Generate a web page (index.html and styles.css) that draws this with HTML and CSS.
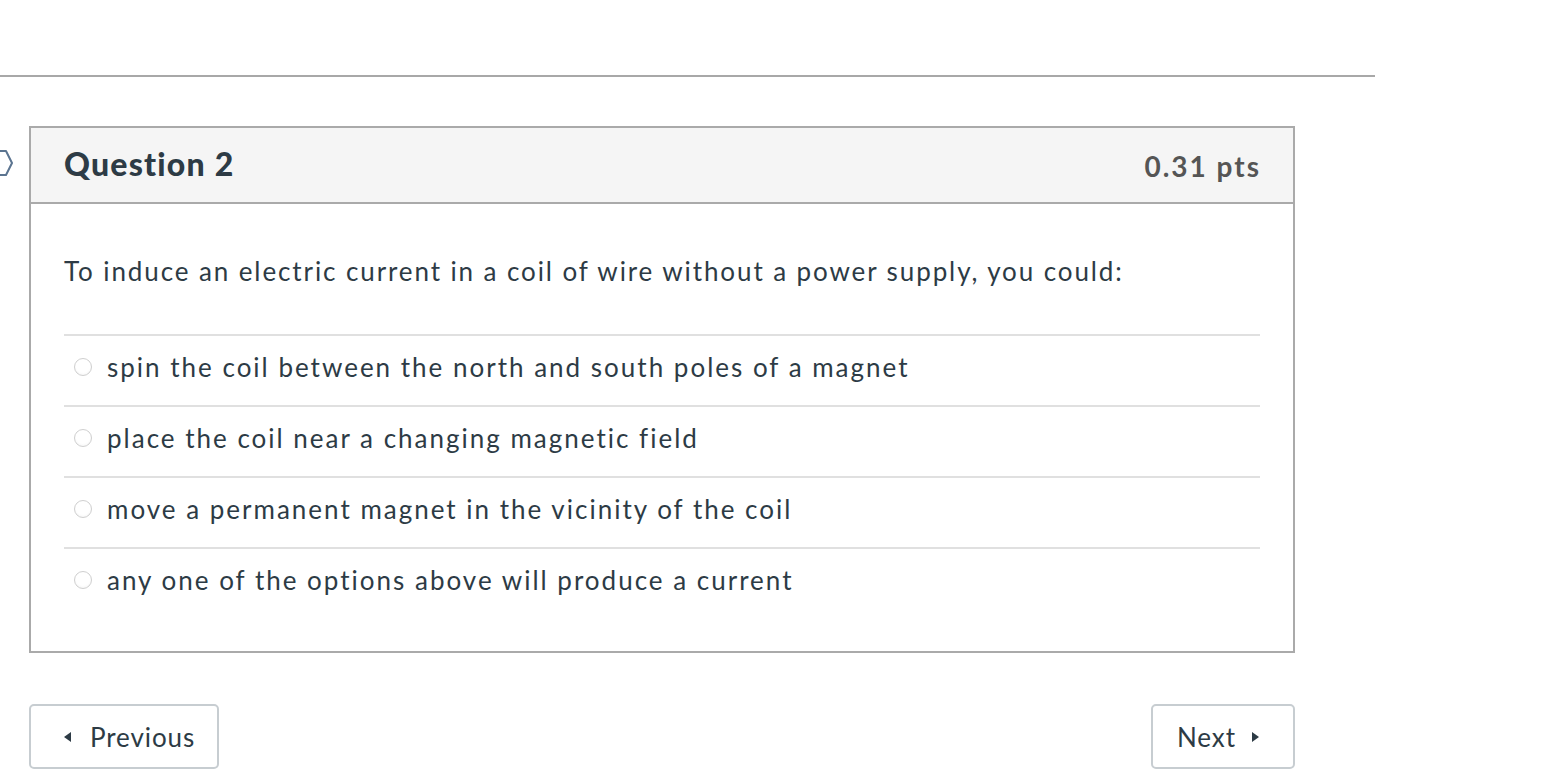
FILE: index.html
```html
<!DOCTYPE html>
<html>
<head>
<meta charset="utf-8">
<link rel="stylesheet" href="styles.css">
</head>
<body>
<div class="page">
  <div class="topspace"></div>
  <div class="rule"></div>
  <div class="question-row">
    <svg class="flag" width="16" height="40" viewBox="0 0 16 40">
      <polyline points="-4,9 6,9 12,21 6,33 -4,33" fill="none" stroke="#5b7490" stroke-width="2" stroke-linejoin="round"/>
    </svg>
    <div class="question">
      <div class="q-header">
        <span class="q-title">Question 2</span>
        <span class="q-pts">0.31 pts</span>
      </div>
      <div class="q-body">
        <p class="q-text">To induce an electric current in a coil of wire without a power supply, you could:</p>
        <div class="answers">
          <div class="answer"><span class="radio"></span><span class="a-text">spin the coil between the north and south poles of a magnet</span></div>
          <div class="answer"><span class="radio"></span><span class="a-text">place the coil near a changing magnetic field</span></div>
          <div class="answer"><span class="radio"></span><span class="a-text">move a permanent magnet in the vicinity of the coil</span></div>
          <div class="answer"><span class="radio"></span><span class="a-text">any one of the options above will produce a current</span></div>
        </div>
      </div>
    </div>
  </div>
  <div class="nav">
    <button class="btn btn-prev"><span class="tri tri-left"></span>Previous</button>
    <button class="btn btn-next">Next<span class="tri tri-right"></span></button>
  </div>
</div>
</body>
</html>
```
FILE: styles.css
```css
html, body {
  margin: 0;
  padding: 0;
  background: #ffffff;
}
body {
  font-family: Lato, "Open Sans", "Liberation Sans", sans-serif;
  color: #2d3b45;
}
.page {
  width: 1546px;
  height: 780px;
  overflow: hidden;
}
.topspace {
  height: 75px;
}
.rule {
  width: 1375px;
  height: 2px;
  background: #a8a8a8;
}
.question-row {
  display: flex;
  align-items: flex-start;
  margin-top: 49px;
}
.flag {
  width: 16px;
  height: 40px;
  margin-top: 16px;
  margin-right: 13px;
  flex: none;
}
.question {
  width: 1262px;
  border: 2px solid #aaaaaa;
  background: #fff;
}
.q-header {
  height: 74px;
  background: #f5f5f5;
  border-bottom: 2px solid #aaaaaa;
  display: flex;
  justify-content: space-between;
  align-items: center;
  padding: 0 34px 0 33px;
}
.q-title {
  font-weight: 900;
  font-size: 32px;
  letter-spacing: 1.2px;
  color: #2d3b45;
  margin-top: -4px;
}
.q-pts {
  font-weight: 700;
  font-size: 28px;
  letter-spacing: 2px;
  color: #555555;
  margin-top: 2px;
  margin-right: -2px;
}
.q-body {
  padding: 0 33px 33px 33px;
}
.q-text {
  margin: 0;
  padding-top: 51px;
  padding-bottom: 47px;
  font-size: 26px;
  line-height: 32px;
  letter-spacing: 1.9px;
}
.answers {
  display: flex;
  flex-direction: column;
}
.answer {
  display: flex;
  align-items: center;
  height: 54px;
  padding-top: 15px;
  align-items: flex-start;
  border-top: 2px solid #e0e0e0;
}
.radio {
  width: 16px;
  height: 16px;
  border-radius: 50%;
  border: 1px solid #cfcfcf;
  background: radial-gradient(circle at 50% 40%, #ffffff 55%, #f0f0f0 100%);
  margin-left: 10px;
  margin-right: 15px;
  margin-top: 7px;
  flex: none;
}
.a-text {
  font-size: 26px;
  line-height: 32px;
  letter-spacing: 2px;
}
.nav {
  display: flex;
  justify-content: space-between;
  width: 1266px;
  margin-left: 29px;
  margin-top: 51px;
}
.btn {
  height: 65px;
  border: 2px solid #c7cdd1;
  border-radius: 5px;
  background: #ffffff;
  font-family: Lato, "Open Sans", "Liberation Sans", sans-serif;
  font-size: 26px;
  letter-spacing: 0.9px;
  color: #2d3b45;
  display: flex;
  align-items: center;
  padding: 0;
}
.btn-prev {
  width: 190px;
  padding-left: 33px;
}
.btn-next {
  width: 144px;
  padding-left: 24px;
}
.tri {
  width: 0;
  height: 0;
  border-top: 5px solid transparent;
  border-bottom: 5px solid transparent;
  display: inline-block;
}
.tri-left {
  border-right: 7px solid #2d3b45;
  margin-right: 19px;
}
.tri-right {
  border-left: 7px solid #2d3b45;
  margin-left: 16px;
}
```
